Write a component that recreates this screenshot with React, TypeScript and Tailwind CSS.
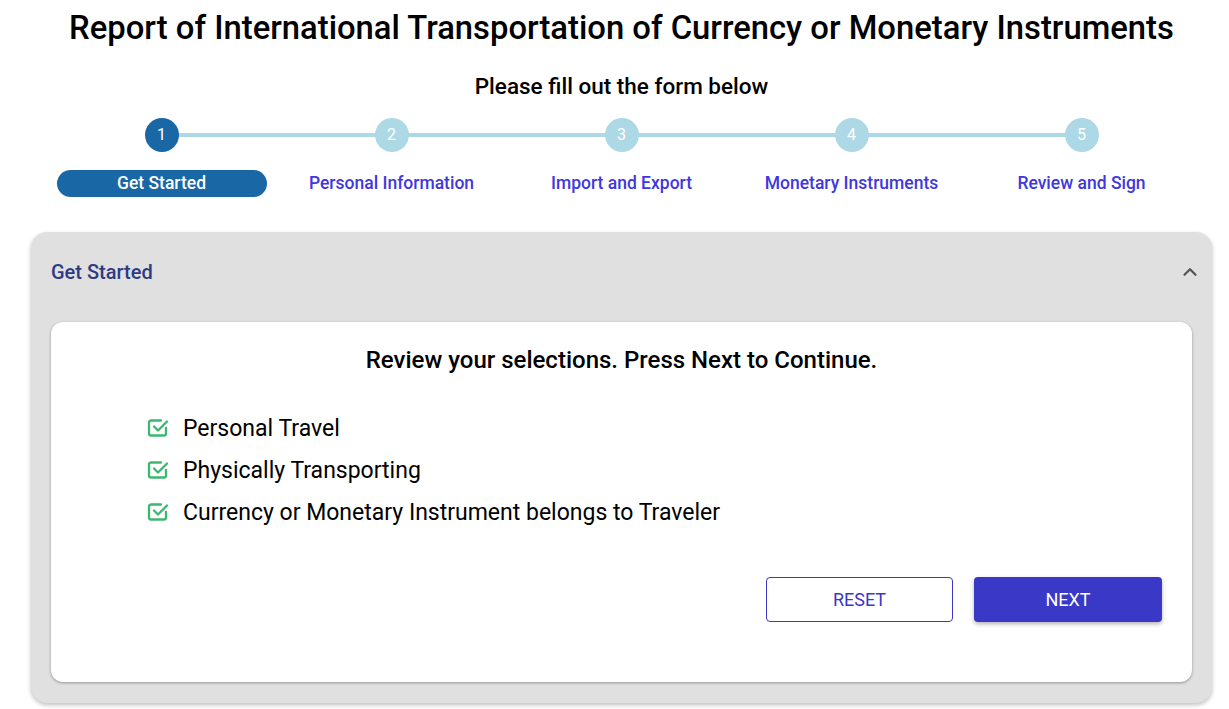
import React from 'react';
import { ChevronUp } from 'lucide-react';

const steps = [
  'Get Started',
  'Personal Information',
  'Import and Export',
  'Monetary Instruments',
  'Review and Sign',
];

const selections = [
  'Personal Travel',
  'Physically Transporting',
  'Currency or Monetary Instrument belongs to Traveler',
];

const CheckIcon: React.FC = () => (
  <svg className="mb-[4px]" width="22" height="19" viewBox="0 0 22 19" fill="none" stroke="#3cb86e" strokeWidth="2.3" strokeLinecap="round" strokeLinejoin="round">
    <path d="M19 10V15.5a2 2 0 0 1-2 2H4a2 2 0 0 1-2-2V4.5a2 2 0 0 1 2-2h10" />
    <path d="M7 8.5l4 4 9-9" />
  </svg>
);

const Stepper: React.FC = () => (
  <div className="mx-[15px] grid grid-cols-5 w-[1150px]">
    {steps.map((label, i) => (
      <div key={label} className="flex flex-col items-center">
        <div className="relative w-full h-[34px] flex justify-center">
          {i > 0 && <div className="absolute left-0 right-1/2 top-[15px] h-[4px] bg-[#add8e6]" />}
          {i < steps.length - 1 && <div className="absolute left-1/2 right-0 top-[15px] h-[4px] bg-[#add8e6]" />}
          <div
            className={`relative z-10 w-[34px] h-[34px] rounded-full flex items-center justify-center text-[16px] text-white ${
              i === 0 ? 'bg-[#1a67a6]' : 'bg-[#add8e6]'
            }`}
          >
            {i + 1}
          </div>
        </div>
        <div className="mt-[18px] w-full px-[10px]">
          <div
            className={`h-[27px] rounded-full flex items-center justify-center text-[17.5px] font-medium ${
              i === 0 ? 'bg-[#1a67a6] text-white' : 'text-[#4037e0]'
            }`}
          >
            {label}
          </div>
        </div>
      </div>
    ))}
  </div>
);

export default function App() {
  return (
    <div className="min-h-screen bg-white font-['Roboto',sans-serif] text-black">
      <div className="ml-[31px] w-[1181px] flex flex-col items-center">
        <h1 className="mt-[6px] text-[32.8px] leading-[44px] font-medium">
          Report of International Transportation of Currency or Monetary Instruments
        </h1>
        <p className="mt-[21px] text-[22.5px] leading-[30px] font-medium">Please fill out the form below</p>
        <div className="mt-[17px]">
          <Stepper />
        </div>

        <div className="mt-[35px] w-full h-[471px] rounded-[16px] bg-[#e0e0e0] shadow-[0_2px_4px_rgba(0,0,0,0.25)] px-[20px] pt-[26px]">
          <div className="flex items-center justify-between">
            <span className="text-[20px] leading-[28px] font-medium text-[#2e3a84]">Get Started</span>
            <ChevronUp className="w-[22px] h-[22px] text-[#555] mr-[-9px]" strokeWidth={2.5} />
          </div>

          <div className="mt-[36px] h-[360px] rounded-[12px] bg-white shadow-[0_1px_3px_rgba(0,0,0,0.35)] pt-[22px] px-[30px] flex flex-col">
            <h2 className="text-center text-[24px] leading-[32px] font-medium">
              Review your selections. Press Next to Continue.
            </h2>
            <ul className="mt-[39px] ml-[66px] flex flex-col gap-[14px]">
              {selections.map((s) => (
                <li key={s} className="flex items-center gap-[14px] text-[23px] leading-[28px]">
                  <CheckIcon />
                  <span>{s}</span>
                </li>
              ))}
            </ul>
            <div className="mt-[50px] flex justify-end gap-[21px]">
              <button className="w-[187px] h-[45px] rounded-[4px] border border-[#3b38c6] text-[#3b38c6] text-[18px] bg-white">
                RESET
              </button>
              <button className="w-[188px] h-[45px] rounded-[4px] bg-[#3a38c6] text-white text-[18px] shadow-[0_2px_4px_rgba(0,0,0,0.3)]">
                NEXT
              </button>
            </div>
          </div>
        </div>
      </div>
    </div>
  );
}
